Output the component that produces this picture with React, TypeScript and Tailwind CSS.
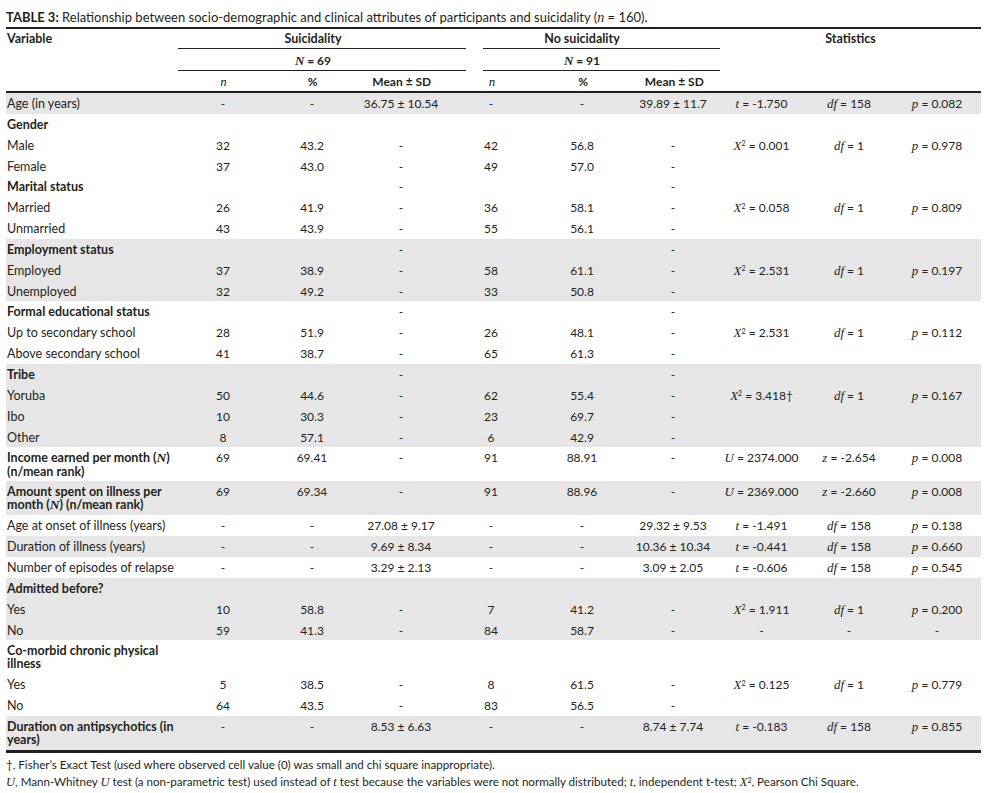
import React from 'react';

interface Row {
    label: React.ReactNode;
    bold?: boolean;
    shaded?: boolean;
    tall?: boolean;
    vals?: string[];
    stats?: React.ReactNode[];
}

// serif italic for the math symbols
const Mi = ({ children }: { children: React.ReactNode }) => (
    <span className="font-['Liberation_Serif',serif] italic text-[1.08em] leading-none">{children}</span>
);

const t = (v: string) => <><Mi>t</Mi> = {v}</>;
const df = (v: string) => <><Mi>df</Mi> = {v}</>;
const p = (v: string) => <><Mi>p</Mi> = {v}</>;
const u = (v: string) => <><Mi>U</Mi> = {v}</>;
const z = (v: string) => <><Mi>z</Mi> = {v}</>;
const chi = (v: string) => (
    <><Mi>X</Mi><sup className="text-[7px]">2</sup> = {v}</>
);

const groupDash = ['', '', '-', '', '', '-'];

const rows: Row[] = [
    { label: 'Age (in years)', shaded: true, vals: ['-', '-', '36.75 ± 10.54', '-', '-', '39.89 ± 11.7'], stats: [t('-1.750'), df('158'), p('0.082')] },
    { label: 'Gender', bold: true },
    { label: 'Male', vals: ['32', '43.2', '-', '42', '56.8', '-'], stats: [chi('0.001'), df('1'), p('0.978')] },
    { label: 'Female', vals: ['37', '43.0', '-', '49', '57.0', '-'] },
    { label: 'Marital status', bold: true, vals: groupDash },
    { label: 'Married', vals: ['26', '41.9', '-', '36', '58.1', '-'], stats: [chi('0.058'), df('1'), p('0.809')] },
    { label: 'Unmarried', vals: ['43', '43.9', '-', '55', '56.1', '-'] },
    { label: 'Employment status', bold: true, shaded: true, vals: groupDash },
    { label: 'Employed', shaded: true, vals: ['37', '38.9', '-', '58', '61.1', '-'], stats: [chi('2.531'), df('1'), p('0.197')] },
    { label: 'Unemployed', shaded: true, vals: ['32', '49.2', '-', '33', '50.8', '-'] },
    { label: 'Formal educational status', bold: true, vals: groupDash },
    { label: 'Up to secondary school', vals: ['28', '51.9', '-', '26', '48.1', '-'], stats: [chi('2.531'), df('1'), p('0.112')] },
    { label: 'Above secondary school', vals: ['41', '38.7', '-', '65', '61.3', '-'] },
    { label: 'Tribe', bold: true, shaded: true, vals: groupDash },
    { label: 'Yoruba', shaded: true, vals: ['50', '44.6', '-', '62', '55.4', '-'], stats: [chi('3.418†'), df('1'), p('0.167')] },
    { label: 'Ibo', shaded: true, vals: ['10', '30.3', '-', '23', '69.7', '-'] },
    { label: 'Other', shaded: true, vals: ['8', '57.1', '-', '6', '42.9', '-'] },
    {
        label: <>Income earned per month (<Mi>N</Mi>)<br />(n/mean rank)</>,
        bold: true, tall: true,
        vals: ['69', '69.41', '-', '91', '88.91', '-'], stats: [u('2374.000'), z('-2.654'), p('0.008')],
    },
    {
        label: <>Amount spent on illness per<br />month (<Mi>N</Mi>) (n/mean rank)</>,
        bold: true, tall: true, shaded: true,
        vals: ['69', '69.34', '-', '91', '88.96', '-'], stats: [u('2369.000'), z('-2.660'), p('0.008')],
    },
    { label: 'Age at onset of illness (years)', vals: ['-', '-', '27.08 ± 9.17', '-', '-', '29.32 ± 9.53'], stats: [t('-1.491'), df('158'), p('0.138')] },
    { label: 'Duration of illness (years)', shaded: true, vals: ['-', '-', '9.69 ± 8.34', '-', '-', '10.36 ± 10.34'], stats: [t('-0.441'), df('158'), p('0.660')] },
    { label: 'Number of episodes of relapse', vals: ['-', '-', '3.29 ± 2.13', '-', '-', '3.09 ± 2.05'], stats: [t('-0.606'), df('158'), p('0.545')] },
    { label: 'Admitted before?', bold: true, shaded: true },
    { label: 'Yes', shaded: true, vals: ['10', '58.8', '-', '7', '41.2', '-'], stats: [chi('1.911'), df('1'), p('0.200')] },
    { label: 'No', shaded: true, vals: ['59', '41.3', '-', '84', '58.7', '-'], stats: ['-', '-', '-'] },
    { label: <>Co-morbid chronic physical<br />illness</>, bold: true, tall: true },
    { label: 'Yes', vals: ['5', '38.5', '-', '8', '61.5', '-'], stats: [chi('0.125'), df('1'), p('0.779')] },
    { label: 'No', vals: ['64', '43.5', '-', '83', '56.5', '-'] },
    {
        label: <>Duration on antipsychotics (in<br />years)</>,
        bold: true, tall: true, shaded: true,
        vals: ['-', '-', '8.53 ± 6.63', '-', '-', '8.74 ± 7.74'], stats: [t('-0.183'), df('158'), p('0.855')],
    },
];

const App: React.FC = () => {
    return (
        <div className="min-h-screen bg-white pl-[6px] pr-[10px] text-[12px] text-[#231f20] font-['Lato',sans-serif]">
            {/* Caption */}
            <div className="h-[29px] pt-[10px] text-[13px] leading-[14px] whitespace-nowrap border-b-2 border-[#231f20]">
                <span className="font-bold">TABLE 3:</span> Relationship between socio-demographic and clinical attributes of participants and suicidality (<Mi>n</Mi> = 160).
            </div>

            {/* Column headers */}
            <div className="flex h-[20px] leading-[13px] pt-[3px] font-bold text-[12.5px]">
                <div className="w-[172px] pl-[1px]">Variable</div>
                <div className="w-[288px] border-b border-[#231f20] text-center pr-[18px]">Suicidality</div>
                <div className="w-[17px]" />
                <div className="w-[237px] border-b border-[#231f20] text-center pr-[39px]">No suicidality</div>
                <div className="flex-1 text-center">Statistics</div>
            </div>
            <div className="flex h-[22px] leading-[13px] pt-[5px] font-bold">
                <div className="w-[172px]" />
                <div className="w-[288px] border-b border-[#231f20] text-center pr-[18px]"><Mi>N</Mi> = 69</div>
                <div className="w-[17px]" />
                <div className="w-[237px] border-b border-[#231f20] text-center pr-[39px]"><Mi>N</Mi> = 91</div>
                <div className="flex-1" />
            </div>
            <div className="h-[22px] border-b-2 border-[#231f20] leading-[13px] pt-[4px]">
                <table className="table-fixed w-full border-collapse font-bold">
                    <colgroup>
                        <col className="w-[172px]" />
                        <col className="w-[90px]" />
                        <col className="w-[88px]" />
                        <col className="w-[90px]" />
                        <col className="w-[90px]" />
                        <col className="w-[92px]" />
                        <col className="w-[90px]" />
                        <col className="w-[261px]" />
                    </colgroup>
                    <tbody>
                        <tr>
                            <td />
                            <td className="text-center font-normal"><Mi>n</Mi></td>
                            <td className="text-center">%</td>
                            <td className="text-center">Mean ± SD</td>
                            <td className="text-center font-normal"><Mi>n</Mi></td>
                            <td className="text-center">%</td>
                            <td className="text-center">Mean ± SD</td>
                            <td />
                        </tr>
                    </tbody>
                </table>
            </div>

            {/* Body */}
            <div className="border-b-[3px] border-[#231f20]">
                <table className="table-fixed w-full border-collapse leading-[13px]">
                    <colgroup>
                        <col className="w-[172px]" />
                        <col className="w-[90px]" />
                        <col className="w-[88px]" />
                        <col className="w-[90px]" />
                        <col className="w-[90px]" />
                        <col className="w-[92px]" />
                        <col className="w-[90px]" />
                        <col className="w-[87px]" />
                        <col className="w-[88px]" />
                        <col className="w-[88px]" />
                    </colgroup>
                    <tbody>
                        {rows.map((row, i) => {
                            const vals = row.vals ?? ['', '', '', '', '', ''];
                            const stats = row.stats ?? ['', '', ''];
                            return (
                                <tr
                                    key={i}
                                    className={`${row.tall ? 'h-[34px]' : 'h-[20.85px]'} ${row.shaded ? 'bg-[#e6e6e6]' : 'bg-white'}`}
                                >
                                    <td className={`pl-[1px] pt-[4px] align-top whitespace-nowrap text-[12.5px] ${row.bold ? 'font-bold' : ''}`}>
                                        {row.label}
                                    </td>
                                    {vals.map((v, j) => (
                                        <td key={j} className="pt-[4px] align-top text-center whitespace-nowrap">{v}</td>
                                    ))}
                                    {stats.map((s, j) => (
                                        <td key={j} className="pt-[4px] align-top text-center whitespace-nowrap">{s}</td>
                                    ))}
                                </tr>
                            );
                        })}
                    </tbody>
                </table>
            </div>

            {/* Footnotes */}
            <div className="pt-[3px] text-[11.6px] leading-[17px] whitespace-nowrap">
                <div>†, Fisher’s Exact Test (used where observed cell value (0) was small and chi square inappropriate).</div>
                <div>
                    <Mi>U</Mi>, Mann-Whitney <Mi>U</Mi> test (a non-parametric test) used instead of <Mi>t</Mi> test because the variables were not normally distributed; <Mi>t</Mi>, independent t-test; <Mi>X</Mi><sup className="text-[7px]">2</sup>, Pearson Chi Square.
                </div>
            </div>
        </div>
    );
};

export default App;
